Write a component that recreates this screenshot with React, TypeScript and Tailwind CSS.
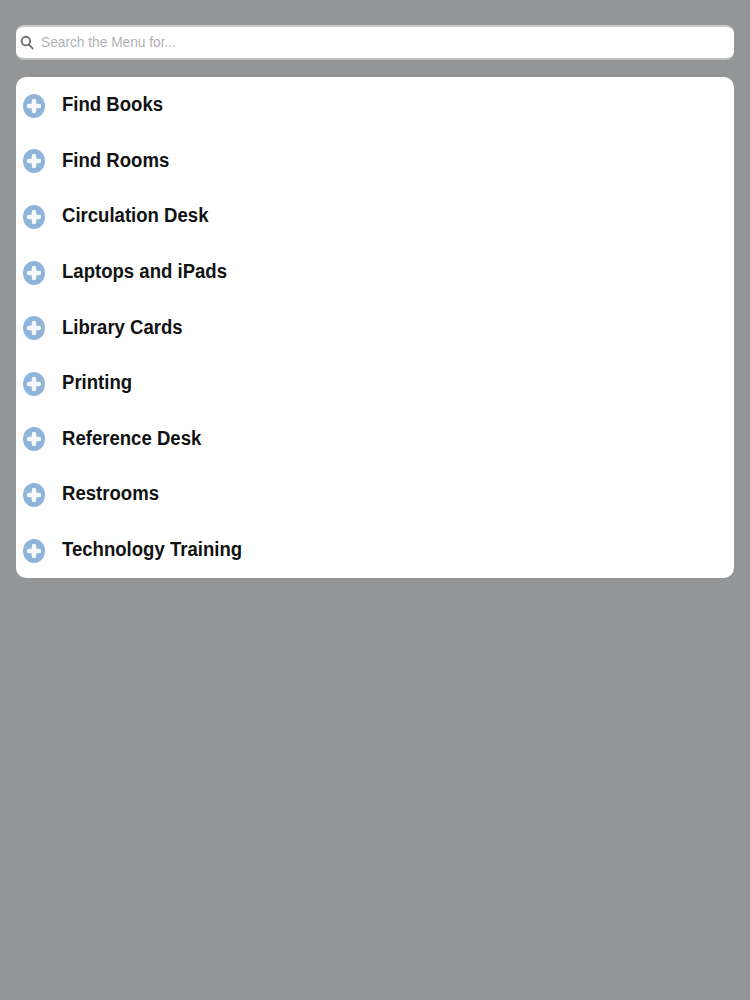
import React from "react";

const items = [
  "Find Books",
  "Find Rooms",
  "Circulation Desk",
  "Laptops and iPads",
  "Library Cards",
  "Printing",
  "Reference Desk",
  "Restrooms",
  "Technology Training",
];

function PlusIcon() {
  return (
    <svg width="22" height="24" viewBox="0 0 22 24" className="mt-[1px] shrink-0">
      <ellipse cx="11" cy="12" rx="11" ry="12" fill="#8eb4da" />
      <path d="M11 7v10M6 12h10" stroke="#f7f9fc" strokeWidth="4.5" strokeLinecap="round" />
    </svg>
  );
}

export default function App() {
  return (
    <div className="min-h-[1000px] bg-[#939596] pl-[15.5px] pr-[16px] pt-[25px] font-['Liberation_Sans',Arial,sans-serif]">
      <div className="flex h-[34.5px] items-center rounded-[8px] border-t-2 border-b-2 border-t-[#c9cbcb] border-b-[#bfc1c1] bg-white pl-[4px]">
        <svg width="14" height="15" viewBox="0 0 15 16" fill="none" stroke="#6f7274" strokeWidth="2">
          <circle cx="6.3" cy="6.5" r="4.6" />
          <path d="M9.7 10.2l3.8 4.2" strokeLinecap="round" />
        </svg>
        <span className="ml-[7.5px] origin-left scale-x-[0.98] text-[14px] text-[#b1b3b5]">Search the Menu for...</span>
      </div>
      <div className="mt-[17.5px] rounded-[10px] bg-white pb-[0.1px] pt-[0.5px]">
        {items.map((item) => (
          <div key={item} className="flex h-[55.6px] items-center pl-[7.5px]">
            <PlusIcon />
            <span className="ml-[17px] origin-left -translate-y-[0.6px] scale-x-[0.928] text-[20px] font-bold text-[#111213]">{item}</span>
          </div>
        ))}
      </div>
    </div>
  );
}
